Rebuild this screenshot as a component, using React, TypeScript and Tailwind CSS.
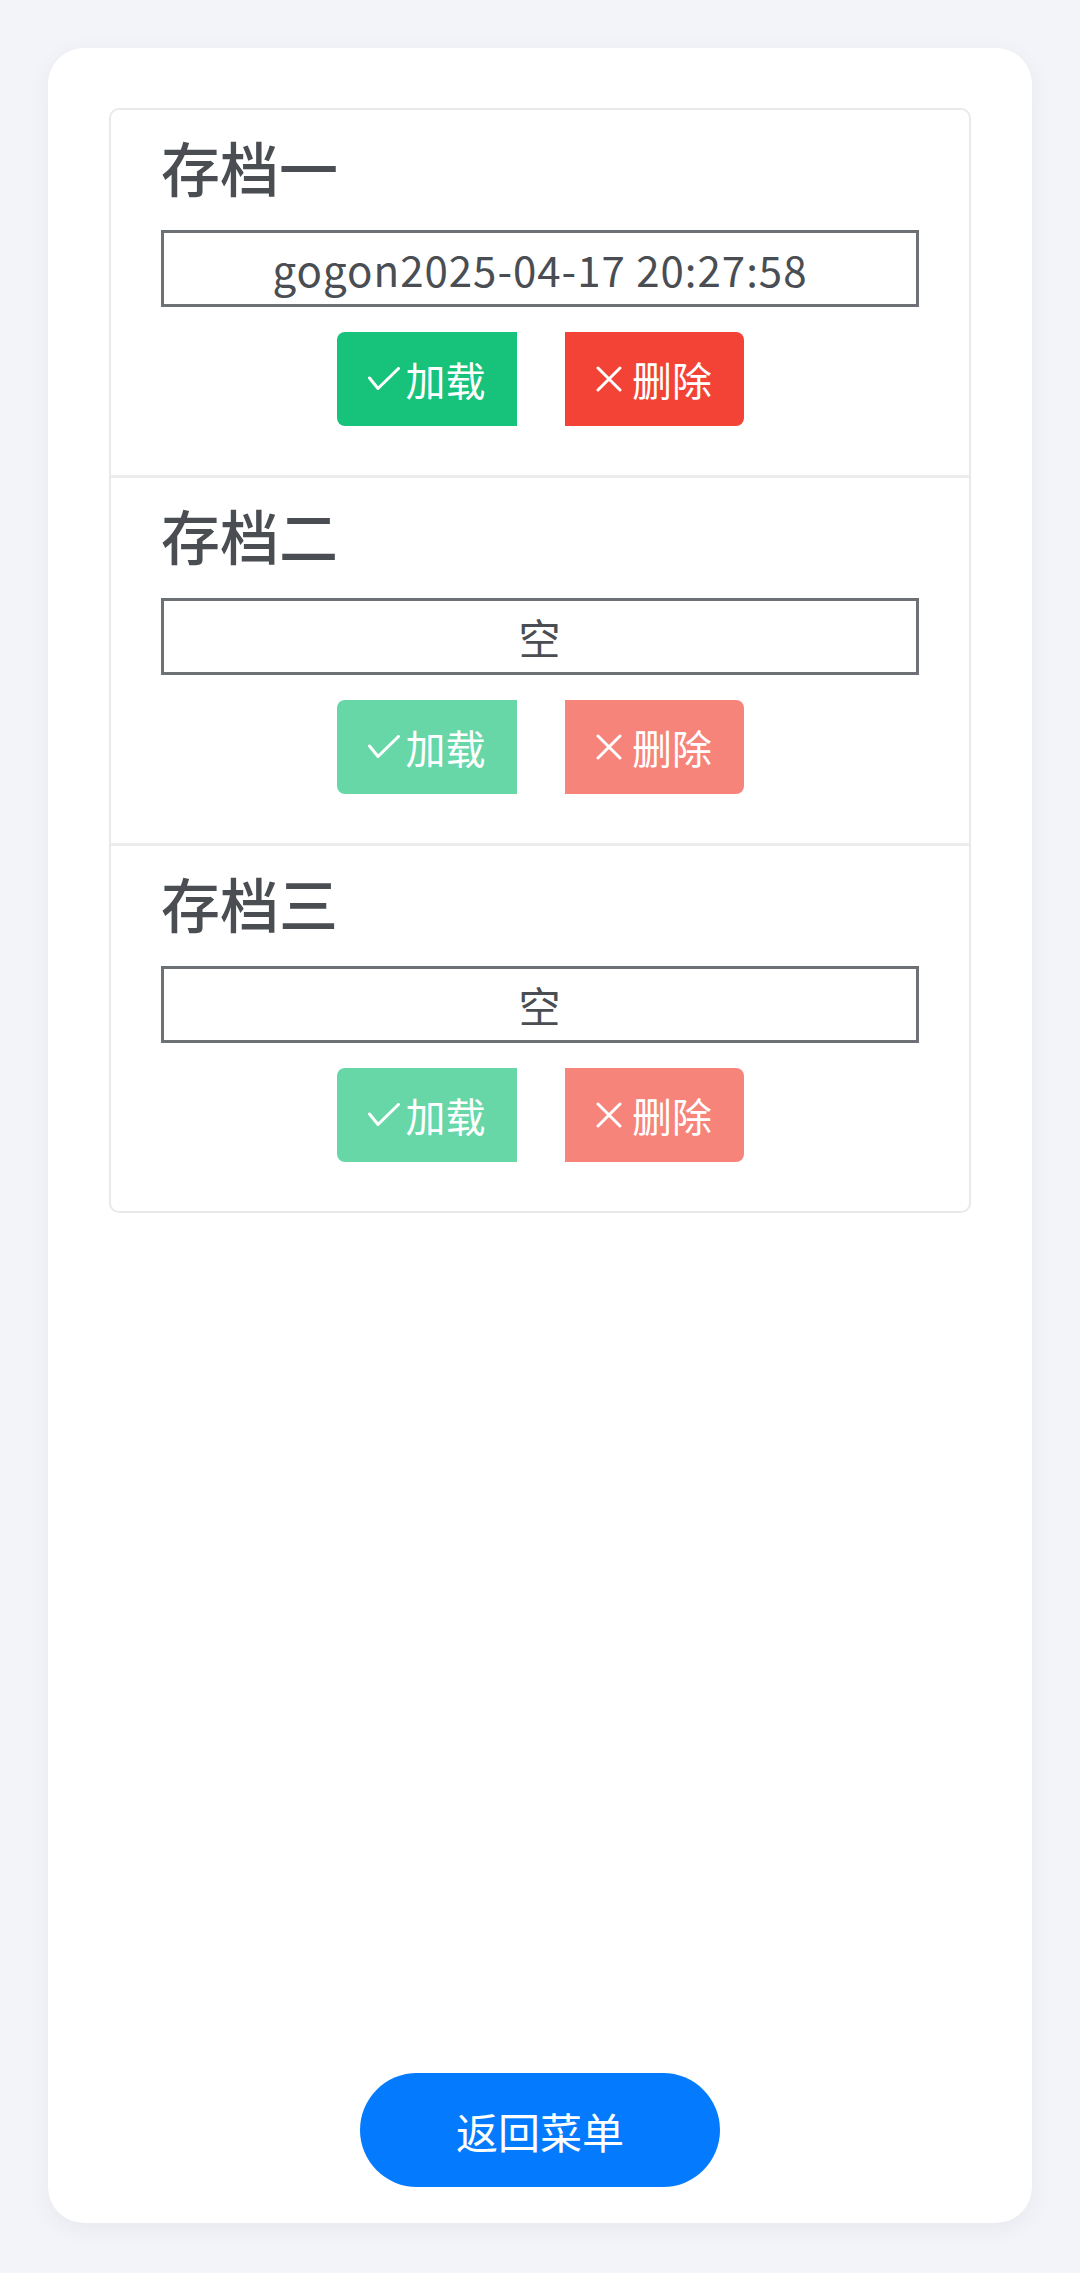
import React from "react";

const font = { fontFamily: '"Noto Sans CJK SC", "Noto Sans", sans-serif' };

type Slot = { title: string; value: string; empty: boolean };

const slots: Slot[] = [
    { title: "存档一", value: "gogon2025-04-17 20:27:58", empty: false },
    { title: "存档二", value: "空", empty: true },
    { title: "存档三", value: "空", empty: true },
];

function CheckMark() {
    return (
        <svg width="32" height="24" viewBox="0 0 32 24" fill="none" className="shrink-0">
            <polyline points="1.5,11 10,21.5 30.5,1.5" stroke="white" strokeWidth="3" strokeLinecap="round" strokeLinejoin="round" />
        </svg>
    );
}

function CrossMark() {
    return (
        <svg width="26" height="26" viewBox="0 0 26 26" fill="none" className="shrink-0">
            <path d="M2 2L24 24M24 2L2 24" stroke="white" strokeWidth="3" strokeLinecap="round" />
        </svg>
    );
}

function SlotRow({ slot, last }: { slot: Slot; last: boolean }) {
    return (
        <div className={`px-[50px] pt-[22px] pb-[49px] ${last ? "" : "border-b-[3px] border-[#ececec]"}`}>
            <h2 className="text-[59px] leading-[70px] font-medium text-[#4a4e53]">{slot.title}</h2>
            <div className="mt-[28px] h-[77px] border-[3px] border-[#6d7074] flex items-center justify-center text-[42px] tracking-[1px] text-[#4a4e53]">
                {slot.value}
            </div>
            <div className={`mt-[25px] flex justify-center gap-[48px] ${slot.empty ? "opacity-65" : ""}`}>
                <button className="w-[180px] h-[94px] bg-[#17c27b] rounded-l-[8px] flex items-center justify-center gap-[6px] text-white text-[40px]">
                    <CheckMark />
                    <span>加载</span>
                </button>
                <button className="w-[179px] h-[94px] bg-[#f34336] rounded-r-[8px] flex items-center justify-center gap-[10px] text-white text-[40px]">
                    <CrossMark />
                    <span>删除</span>
                </button>
            </div>
        </div>
    );
}

export default function App() {
    return (
        <div className="min-h-[2273px] bg-[#f3f4f9] px-[48px] pt-[48px] pb-[50px]" style={font}>
            <div className="h-[2175px] bg-white rounded-[36px] shadow-[0_6px_24px_rgba(0,0,0,0.05)] flex flex-col justify-between px-[61px] pt-[60px] pb-[36px]">
                <div className="border-2 border-[#e9e9e9] rounded-[10px]">
                    {slots.map((s, i) => (
                        <SlotRow key={i} slot={s} last={i === slots.length - 1} />
                    ))}
                </div>
                <div className="flex justify-center">
                    <button className="w-[360px] h-[114px] rounded-full bg-[#047bfe] text-white text-[42px]">返回菜单</button>
                </div>
            </div>
        </div>
    );
}
